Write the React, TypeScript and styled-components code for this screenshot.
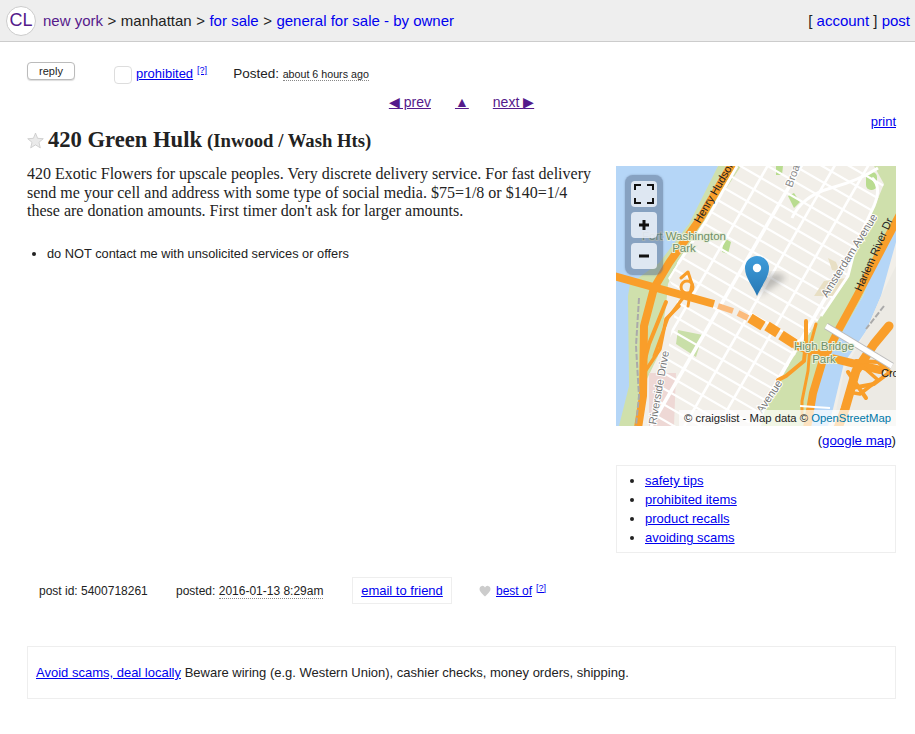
import React from 'react';
import styled, { createGlobalStyle } from 'styled-components';

const GlobalStyle = createGlobalStyle`
  html, body { margin: 0; padding: 0; background: #fff; }
  body { font-family: "Liberation Sans", Arial, sans-serif; color: #222; overflow-x: hidden; }
  a { color: #00e; }
`;

const crossStreets = Array.from({ length: 30 }, (_, i) => -70 + i * 13.6);
const avenues = Array.from({ length: 14 }, (_, i) => -60 + i * 29);

function StreetMap() {
  return (
    <MapSvg viewBox="0 0 280 260" width={280} height={260}>
      <defs>
        <clipPath id="manhattan">
          <polygon points="122,0 258,0 268,18 258,42 240,80 232,112 205,150 175,195 150,240 130,260 34,260 48,205 62,130 52,112 92,50" />
        </clipPath>
        <linearGradient id="pinFill" x1="0" y1="0" x2="0" y2="1">
          <stop offset="0" stopColor="#3f9ddb" />
          <stop offset="1" stopColor="#2878b4" />
        </linearGradient>
        <filter id="soft"><feGaussianBlur stdDeviation="3" /></filter>
      </defs>
      <rect width="280" height="260" fill="#f2efe9" />
      {/* green shores, water on top */}
      <polygon points="102,0 125,0 92,50 62,95 52,118 50,140 42,190 30,215 26,260 0,260 0,100" fill="#cfe0ac" />
      <polygon points="0,0 102,0 73,58 43,97 14,118 12,130 13,220 8,240 3,260 0,260" fill="#b5d6f7" />
      <polygon points="258,0 280,0 280,60 247,130 210,197 197,260 145,260 150,240 175,195 205,150 232,112 240,80 258,42 268,18" fill="#cfe0ac" />
      <polygon points="280,76 265,130 250,165 228,197 217,243 212,260 195,260 200,227 210,197 228,163 247,130 262,90 280,55" fill="#b5d6f7" />
      <polygon points="280,100 280,260 217,260 228,205 250,165 265,130" fill="#eceae4" />
      <polygon points="33,207 60,207 58,260 33,260" fill="#eed8d5" />
      <g fill="#b9dc90">
        <rect x="250" y="6" width="11" height="18" rx="5" />
        <polygon points="172,30 178,27 184,36 178,42" />
        <polygon points="160,0 167,0 166,9 160,9" />
        <polygon points="108,72 115,76 112,88 106,86" />
      </g>
      <polygon points="62,164 87,169 80,191 60,178" fill="#c9dfa8" />
      {/* street grid */}
      <g clipPath="url(#manhattan)">
        <g transform="rotate(30 140 130)" stroke="#fff">
          {crossStreets.map((y) => (
            <line key={y} x1="-100" x2="380" y1={y} y2={y} strokeWidth="2.2" />
          ))}
          {avenues.map((x, i) => (
            <line key={x} x1={x} x2={x} y1="-100" y2="360" strokeWidth={i % 3 === 0 ? 3.6 : 2.6} />
          ))}
        </g>
        <g fill="#e8dfc4">
          <polygon points="208,115 230,112 222,130 198,130" />
          <polygon points="212,92 220,96 224,106 216,104" />
        </g>
      </g>
      <g fill="none" stroke="#fff" strokeWidth="3">
        <path d="M176 52 Q186 30 215 22 T262 2" />
        <path d="M256 12 Q266 20 258 40 L240 78 L232 110 L205 150" />
        <path d="M121 0 L90 55 L62 98" />
      </g>
      {/* motorways */}
      <g fill="none" stroke="#f99e2a" strokeLinecap="round" strokeLinejoin="round">
        <polyline points="116,-2 84,53 53,97 38,122 28,160 27,230 22,262" strokeWidth="8" />
        <polyline points="50,136 33,178 28,197" strokeWidth="4" />
        <polyline points="63,140 50,153 44,183 30,204" strokeWidth="3.5" />
        <polyline points="70,128 52,152 38,190" strokeWidth="3" />
        <line x1="-2" y1="110" x2="98" y2="138" strokeWidth="8" strokeLinecap="butt" />
        <circle cx="71" cy="121" r="6" strokeWidth="3" />
        <polyline points="65,112 72,106 76,118 72,140" strokeWidth="3" />
        <line x1="134" y1="152" x2="147" y2="160" strokeWidth="10" strokeLinecap="butt" />
        <line x1="151" y1="160" x2="162" y2="167" strokeWidth="10" strokeLinecap="butt" />
        <line x1="165" y1="169" x2="179" y2="178" strokeWidth="10" strokeLinecap="butt" />
        <polyline points="181,180 215,192 264,204" strokeWidth="8" />
        <polyline points="283,50 241,130 223,163 206,197 197,227 191,262" strokeWidth="8" />
        <polyline points="273,160 258,178 240,205 229,243 222,262" strokeWidth="9" />
        <polyline points="190,155 190,175 188,195 170,210 162,214" strokeWidth="4" />
        <polyline points="200,158 194,180 192,205 186,235 186,250" strokeWidth="3" />
        <polyline points="240,195 262,196 274,206 258,218 236,222" strokeWidth="4" />
        <polyline points="246,200 262,214 244,228 232,226" strokeWidth="3.5" />
        <polyline points="232,206 250,232" strokeWidth="4" />
      </g>
      <g fill="none" strokeLinecap="butt">
        <line x1="102" y1="140" x2="117" y2="145" stroke="#fbbb7c" strokeWidth="6" />
        <line x1="122" y1="147" x2="132" y2="152" stroke="#fbbb7c" strokeWidth="6" />
        <line x1="210" y1="160" x2="276" y2="200" stroke="#bbb" strokeWidth="7" />
        <line x1="210" y1="160" x2="276" y2="200" stroke="#fff" strokeWidth="5" />
        <polyline points="23,132 20,180 23,230 20,260" stroke="#aaa" strokeWidth="2" strokeDasharray="6 2" />
        <line x1="268" y1="140" x2="250" y2="163" stroke="#aaa" strokeWidth="2" strokeDasharray="6 2" />
        <line x1="184" y1="240" x2="214" y2="242" stroke="#fff" strokeWidth="2" />
      </g>
      {/* labels */}
      <MapLabel transform="translate(84 58) rotate(-60)">Henry Hudson</MapLabel>
      <MapLabel transform="translate(176 22) rotate(-70)" $tone="#888">Broa</MapLabel>
      <MapLabel transform="translate(211 132) rotate(-58)" $tone="#777">Amsterdam Avenue</MapLabel>
      <MapLabel transform="translate(245 126) rotate(-66)">Harlem River Dr</MapLabel>
      <MapLabel transform="translate(40 259) rotate(-80)" $tone="#777">Riverside Drive</MapLabel>
      <MapLabel transform="translate(146 248) rotate(-56)" $tone="#777">Avenue</MapLabel>
      <ParkLabel x="68" y="74">Fort Washington</ParkLabel>
      <ParkLabel x="68" y="86">Park</ParkLabel>
      <ParkLabel x="208" y="184">High Bridge</ParkLabel>
      <ParkLabel x="208" y="197">Park</ParkLabel>
      <MapLabel x="265" y="211">Cro</MapLabel>
      {/* pin */}
      <path d="M143 130 L170 112 Q162 104 150 110 Z" fill="#555" opacity="0.35" filter="url(#soft)" />
      <path
        d="M141 130 C137 120 129 112 129 102 A12 12 0 0 1 153 102 C153 112 145 120 141 130 Z"
        fill="url(#pinFill)"
      />
      <circle cx="141" cy="102" r="4.2" fill="#fff" />
    </MapSvg>
  );
}

function App() {
  return (
    <>
      <GlobalStyle />
      <TopBar>
        <Crumbs>
          <Logo>CL</Logo>
          <Crumb href="#" $visited>new york</Crumb>
          <span>&gt;</span>
          <span>manhattan</span>
          <span>&gt;</span>
          <Crumb href="#">for sale</Crumb>
          <span>&gt;</span>
          <Crumb href="#">general for sale - by owner</Crumb>
        </Crumbs>
        <Account>
          [ <Crumb href="#">account</Crumb> ] <Crumb href="#">post</Crumb>
        </Account>
      </TopBar>

      <Page>
        <ActionRow>
          <ReplyButton>reply</ReplyButton>
          <FlagBox />
          <FlagLink href="#">prohibited</FlagLink>
          <Help href="#" $drop={4}>[?]</Help>
          <PostedLabel>
            Posted: <Stamp>about 6 hours ago</Stamp>
          </PostedLabel>
        </ActionRow>

        <PrevNext>
          <NavLink href="#"><small>◀</small> prev</NavLink>
          <NavLink href="#"><small>▲</small></NavLink>
          <NavLink href="#">next <small>▶</small></NavLink>
        </PrevNext>

        <PrintRow>
          <a href="#">print</a>
        </PrintRow>

        <Title>
          <StarIcon viewBox="0 0 24 24" width="17" height="17">
            <path d="M12 1.5l3 7.4 8 .6-6.1 5.1 1.9 7.8L12 18.2 5.2 22.4l1.900-7.800L1 9.5l8-.6z" />
          </StarIcon>
          <TitleText>420 Green Hulk</TitleText>
          <TitleArea>(Inwood / Wash Hts)</TitleArea>
        </Title>

        <Columns>
          <Description>
            <Body>
              420 Exotic Flowers for upscale peoples. Very discrete delivery service. For fast delivery
              send me your cell and address with some type of social media. $75=1/8 or $140=1/4
              these are donation amounts. First timer don't ask for larger amounts.
            </Body>
            <Notices>
              <li>do NOT contact me with unsolicited services or offers</li>
            </Notices>
          </Description>

          <Aside>
            <MapFrame>
              <StreetMap />
              <Controls>
                <ControlButton>
                  <svg viewBox="0 0 20 20" width="20" height="20" fill="none" stroke="#111" strokeWidth="2">
                    <path d="M1 6V1h6M13 1h6v5M19 14v5h-6M7 19H1v-5" />
                  </svg>
                </ControlButton>
                <ControlButton>
                  <svg viewBox="0 0 12 12" width="12" height="12" fill="#111">
                    <path d="M4.5 1h3v3.5H11v3H7.5V11h-3V7.5H1v-3h3.5z" />
                  </svg>
                </ControlButton>
                <ControlButton>
                  <svg viewBox="0 0 12 12" width="12" height="12" fill="#111">
                    <rect x="1" y="4.5" width="10" height="3" />
                  </svg>
                </ControlButton>
              </Controls>
              <Attribution>
                © craigslist - Map data © <OsmLink>OpenStreetMap</OsmLink>
              </Attribution>
            </MapFrame>
            <MapCaption>
              (<a href="#">google map</a>)
            </MapCaption>
            <SafetyBox>
              <SafetyList>
                <li><a href="#">safety tips</a></li>
                <li><a href="#">prohibited items</a></li>
                <li><a href="#">product recalls</a></li>
                <li><a href="#">avoiding scams</a></li>
              </SafetyList>
            </SafetyBox>
          </Aside>
        </Columns>

        <FooterRow>
          <PostId>post id: 5400718261</PostId>
          <PostedAt>
            posted: <Stamp $large>2016-01-13 8:29am</Stamp>
          </PostedAt>
          <EmailBox><a href="#">email to friend</a></EmailBox>
          <BestOf>
            <HeartIcon viewBox="0 0 12 12" width="12" height="12">
              <path d="M6 11.5C2 8 .5 6 .5 3.8A2.9 2.9 0 0 1 6 2.5a2.9 2.9 0 0 1 5.5 1.3C11.5 6 10 8 6 11.5z" />
            </HeartIcon>
            <a href="#">best of</a>
            <Help href="#">[?]</Help>
          </BestOf>
        </FooterRow>

        <ScamBox>
          <a href="#">Avoid scams, deal locally</a> Beware wiring (e.g. Western Union), cashier checks,
          money orders, shipping.
        </ScamBox>
      </Page>
    </>
  );
}

const TopBar = styled.header`
  height: 41px;
  background: #eee;
  border-bottom: 1px solid #ccc;
  display: flex;
  align-items: center;
  justify-content: space-between;
  padding: 0 5px 0 6px;
  font-size: 15px;
`;
const Crumbs = styled.nav`
  display: flex;
  align-items: center;
  gap: 4.5px;
`;
const Logo = styled.span`
  width: 28px;
  height: 28px;
  margin-right: 2.5px;
  border-radius: 50%;
  background: #fff;
  border: 1px solid #ccc;
  display: flex;
  align-items: center;
  justify-content: center;
  font-size: 18px;
  color: #551a8b;
`;
const Crumb = styled.a<{ $visited?: boolean }>`
  color: ${(p) => (p.$visited ? '#551a8b' : '#00e')};
  text-decoration: none;
`;
const Account = styled.div``;
const Page = styled.main`
  padding: 0 19px 0 27px;
  font-size: 13px;
`;
const ActionRow = styled.div`
  display: flex;
  align-items: flex-start;
  padding-top: 20px;
  height: 52px;
  box-sizing: border-box;
`;
const ReplyButton = styled.button`
  width: 48px;
  height: 18px;
  padding: 0;
  background: #fff;
  border: 1px solid #bbb;
  border-radius: 4px;
  box-shadow: 0 1px 1px #ddd;
  font: 11px "Liberation Sans", Arial, sans-serif;
  color: #222;
`;
const FlagBox = styled.span`
  width: 16px;
  height: 16px;
  margin: 4px 4px 0 39px;
  border: 1px solid #ddd;
  border-radius: 4px;
`;
const FlagLink = styled.a`
  margin-top: 4px;
`;
const Help = styled.a<{ $drop?: number }>`
  font-size: 9px;
  margin: ${(p) => p.$drop || 0}px 0 0 4px;
  align-self: flex-start;
  line-height: 1;
`;
const PostedLabel = styled.span`
  margin: 4px 0 0 26px;
  font-size: 13.5px;
`;
const Stamp = styled.span<{ $large?: boolean }>`
  font-size: ${(p) => (p.$large ? '12px' : '10.7px')};
  border-bottom: 1px dotted #888;
`;
const PrevNext = styled.div`
  display: flex;
  justify-content: center;
  gap: 24px;
  height: 17px;
  line-height: 17px;
  font-size: 14px;
`;
const NavLink = styled.a`
  color: #551a8b;
  small { font-size: 14px; line-height: 1; }
`;
const PrintRow = styled.div`
  text-align: right;
  height: 14px;
  line-height: 14px;
  margin-top: 4px;
`;
const Title = styled.h1`
  display: flex;
  align-items: baseline;
  margin: 1px 0 0;
  height: 23px;
  line-height: 20px;
  font-family: "Liberation Serif", "Times New Roman", serif;
  font-weight: bold;
`;
const StarIcon = styled.svg`
  fill: #eaeaea;
  stroke: #c4c4c4;
  stroke-width: 1;
  margin: 2px 4px 0 0;
  align-self: flex-start;
`;
const TitleText = styled.span`
  font-size: 22.6px;
`;
const TitleArea = styled.span`
  font-size: 18.7px;
  margin-left: 5px;
`;
const Columns = styled.div`
  display: flex;
  justify-content: space-between;
  margin-top: 12px;
`;
const Description = styled.div`
  width: 572px;
`;
const Body = styled.p`
  margin: 0;
  font: 16px/18.5px "Liberation Serif", "Times New Roman", serif;
`;
const Notices = styled.ul`
  margin: 24px 0 0;
  padding-left: 20px;
  font-size: 12.8px;
  line-height: 18px;
`;
const Aside = styled.aside`
  width: 280px;
  flex: none;
  margin-top: 1px;
`;
const MapFrame = styled.div`
  position: relative;
  width: 280px;
  height: 260px;
  overflow: hidden;
`;
const MapSvg = styled.svg`
  display: block;
`;
const MapLabel = styled.text<{ $tone?: string }>`
  font: 11px "Liberation Sans", Arial, sans-serif;
  fill: ${(p) => p.$tone || '#222'};
  stroke: ${(p) => (p.$tone ? '#fff' : 'none')};
  stroke-width: 2px;
  paint-order: stroke;
`;
const ParkLabel = styled.text`
  font: 11.5px "Liberation Sans", Arial, sans-serif;
  fill: #6f8f68;
  stroke: #eaf0dc;
  stroke-width: 2px;
  paint-order: stroke;
  text-anchor: middle;
`;
const Controls = styled.div`
  position: absolute;
  left: 9px;
  top: 9px;
  width: 26px;
  padding: 6px;
  display: flex;
  flex-direction: column;
  gap: 5px;
  background: rgba(90, 110, 140, 0.5);
  box-shadow: 0 0 2px rgba(90, 110, 140, 0.5);
  border-radius: 8px;
`;
const ControlButton = styled.div`
  width: 26px;
  height: 26px;
  background: rgba(235, 240, 248, 0.88);
  border-radius: 4px;
  display: flex;
  align-items: center;
  justify-content: center;
`;
const Attribution = styled.div`
  position: absolute;
  right: 0;
  bottom: 0;
  padding: 0 5px;
  height: 16px;
  line-height: 16px;
  font-size: 11.3px;
  background: rgba(255, 255, 255, 0.7);
  color: #222;
`;
const OsmLink = styled.span`
  color: #0078a8;
`;
const MapCaption = styled.div`
  text-align: right;
  margin-top: 6px;
  height: 18px;
  line-height: 18px;
  font-size: 13.3px;
`;
const SafetyBox = styled.div`
  margin-top: 15px;
  height: 88px;
  box-sizing: border-box;
  border: 1px solid #eee;
`;
const SafetyList = styled.ul`
  margin: 5px 0 0;
  padding-left: 28px;
  line-height: 19px;
  font-size: 13px;
`;
const FooterRow = styled.div`
  display: flex;
  align-items: center;
  height: 27px;
  margin-top: 24px;
  padding-left: 12px;
  font-size: 12px;
`;
const PostId = styled.span`
  width: 137px;
`;
const PostedAt = styled.span`
  width: 176px;
`;
const EmailBox = styled.span`
  width: 100px;
  height: 27px;
  box-sizing: border-box;
  border: 1px solid #eee;
  display: flex;
  align-items: center;
  justify-content: center;
  font-size: 13px;
`;
const BestOf = styled.span`
  display: flex;
  align-items: center;
  margin-left: 27px;
`;
const HeartIcon = styled.svg`
  fill: #ccc;
  margin-right: 5px;
`;
const ScamBox = styled.div`
  margin-top: 42px;
  height: 53px;
  box-sizing: border-box;
  border: 1px solid #eee;
  padding-left: 8px;
  display: flex;
  align-items: center;
  white-space: pre-wrap;
  font-size: 13px;
`;

export default App;
